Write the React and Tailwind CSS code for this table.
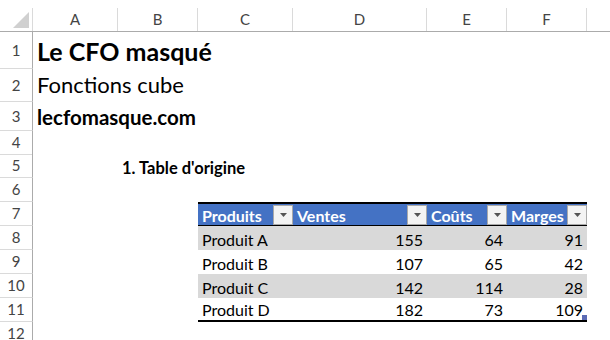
import React from 'react';

const GRID = 'grid grid-cols-[33px_85px_80px_95px_134px_80px_80px_1fr]';

const products = [
  { name: 'Produit A', ventes: 155, couts: 64, marges: 91 },
  { name: 'Produit B', ventes: 107, couts: 65, marges: 42 },
  { name: 'Produit C', ventes: 142, couts: 114, marges: 28 },
  { name: 'Produit D', ventes: 182, couts: 73, marges: 109 },
];

const RowNum = ({ n }) => (
  <div className="flex items-center justify-center border-r border-b border-r-[#ababab] border-b-[#dadada] text-[15px] text-[#444]">
    {n}
  </div>
);

const Dropdown = () => (
  <div className="absolute right-0 top-[1px] flex h-5 w-5 items-center justify-center border border-[#a9a9a9] bg-[#f3f3f3]">
    <svg width="7" height="4" viewBox="0 0 7 4">
      <path d="M0 0H7L3.5 4Z" fill="#555" />
    </svg>
  </div>
);

const HeadCell = ({ label }) => (
  <div className="relative flex items-end overflow-hidden whitespace-nowrap border-t-2 border-b border-black bg-[#4472c4] pb-[1px] pl-1 text-[16px] font-bold leading-none text-white">
    {label}
    <Dropdown />
  </div>
);

const DataCell = ({ children, band, last, right, handle }) => (
  <div
    className={
      'relative flex items-end whitespace-nowrap pb-[2px] text-[16px] leading-none text-black ' +
      (right ? 'justify-end pr-1 ' : 'pl-1 ') +
      (band ? 'bg-[#d9d9d9] ' : 'bg-white ') +
      (last ? 'border-b-2 border-black' : '')
    }
  >
    {children}
    {handle && <div className="absolute bottom-0 right-0 h-[5px] w-[5px] bg-[#5b6bb5]" />}
  </div>
);

export default function App() {
  return (
    <div className="h-[340px] w-[610px] overflow-hidden bg-white pt-2 font-['Lato','Liberation_Sans',sans-serif]">
      {/* column headers */}
      <div className={GRID + ' h-[24px] border-b border-[#ababab]'}>
        <div className="relative border-r border-[#dadada]">
          <svg className="absolute left-[13px] top-[4px]" width="16" height="16" viewBox="0 0 16 16">
            <path d="M16 0V16H0Z" fill="#d0d0d0" />
          </svg>
        </div>
        {['A', 'B', 'C', 'D', 'E', 'F', ''].map((c, i) => (
          <div
            key={i}
            className={
              'flex items-center justify-center text-[15px] text-[#444] ' +
              (c ? 'border-r border-[#dadada]' : '')
            }
          >
            {c}
          </div>
        ))}
      </div>

      {/* row 1 */}
      <div className={GRID + ' h-[37px]'}>
        <RowNum n={1} />
        <div className="flex items-end whitespace-nowrap pb-[5px] pl-1 text-[25px] font-bold leading-none text-black">
          Le CFO masqué
        </div>
      </div>

      {/* row 2 */}
      <div className={GRID + ' h-[33px]'}>
        <RowNum n={2} />
        <div className="flex items-end whitespace-nowrap pb-[6px] pl-1 text-[22px] leading-none text-black">
          Fonctions cube
        </div>
      </div>

      {/* row 3 */}
      <div className={GRID + ' h-[29px]'}>
        <RowNum n={3} />
        <div className="flex items-end whitespace-nowrap pb-[4px] pl-1 text-[20.5px] font-bold leading-none text-black">
          lecfomasque.com
        </div>
      </div>

      {/* row 4 */}
      <div className={GRID + ' h-[23px]'}>
        <RowNum n={4} />
      </div>

      {/* row 5 */}
      <div className={GRID + ' h-[24px]'}>
        <RowNum n={5} />
        <div />
        <div className="flex items-end whitespace-nowrap pb-[2px] pl-1 text-[16.5px] font-bold leading-none text-black">
          1. Table d'origine
        </div>
      </div>

      {/* row 6 */}
      <div className={GRID + ' h-[24px]'}>
        <RowNum n={6} />
      </div>

      {/* row 7 - table header */}
      <div className={GRID + ' h-[24px]'}>
        <RowNum n={7} />
        <div />
        <div />
        <HeadCell label="Produits" />
        <HeadCell label="Ventes" />
        <HeadCell label="Coûts" />
        <HeadCell label="Marges" />
      </div>

      {/* rows 8-11 */}
      {products.map((p, i) => {
        const band = i % 2 === 0;
        const last = i === products.length - 1;
        return (
          <div key={p.name} className={GRID + ' h-[24px]'}>
            <RowNum n={8 + i} />
            <div />
            <div />
            <DataCell band={band} last={last}>{p.name}</DataCell>
            <DataCell band={band} last={last} right>{p.ventes}</DataCell>
            <DataCell band={band} last={last} right>{p.couts}</DataCell>
            <DataCell band={band} last={last} right handle={last}>{p.marges}</DataCell>
          </div>
        );
      })}

      {/* row 12 */}
      <div className={GRID + ' h-[24px]'}>
        <RowNum n={12} />
      </div>
    </div>
  );
}
